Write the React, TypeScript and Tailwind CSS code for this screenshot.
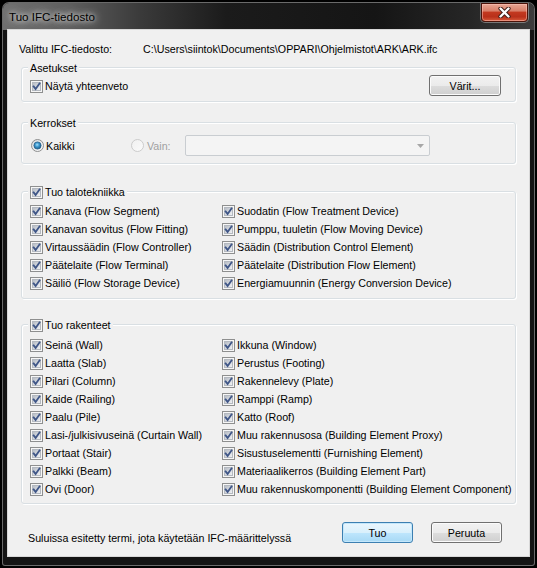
import React, { useId } from "react";

function cleanId(s: string) {
  return s.replace(/[^a-zA-Z0-9]/g, "");
}

function Check() {
  const id = cleanId(useId());
  return (
    <svg width="13" height="13" viewBox="0 0 13 13" className="shrink-0 block">
      <defs>
        <linearGradient id={id} x1="0" y1="0" x2="1" y2="1">
          <stop offset="0" stopColor="#b3b9c2" />
          <stop offset="1" stopColor="#f4f5f7" />
        </linearGradient>
      </defs>
      <rect x="0.5" y="0.5" width="12" height="12" fill="#f6f6f6" stroke="#8e8f8f" />
      <rect x="2.5" y="2.5" width="8" height="8" fill={`url(#${id})`} stroke="#b4b9c0" />
      <path d="M3.6 6.4 L5.6 8.9 L9.5 3.4" fill="none" stroke="#3f5687" strokeWidth="1.8" strokeLinecap="square" strokeLinejoin="miter" />
    </svg>
  );
}

function Radio({ checked, disabled }: { checked?: boolean; disabled?: boolean }) {
  const id = cleanId(useId());
  return (
    <svg width="13" height="13" viewBox="0 0 13 13" className="shrink-0 block">
      <defs>
        <linearGradient id={id + "o"} x1="0" y1="0" x2="1" y2="1">
          <stop offset="0" stopColor={disabled ? "#f0f0f0" : "#d8dadd"} />
          <stop offset="1" stopColor="#fbfbfb" />
        </linearGradient>
        <radialGradient id={id + "d"} cx="0.45" cy="0.4" r="0.6">
          <stop offset="0" stopColor="#a9e0fb" />
          <stop offset="0.45" stopColor="#3f9bd0" />
          <stop offset="1" stopColor="#175a8a" />
        </radialGradient>
      </defs>
      <circle cx="6.5" cy="6.5" r="6" fill={`url(#${id}o)`} stroke={disabled ? "#cbcbcb" : "#8e8f8f"} />
      {checked && <circle cx="6.5" cy="6.5" r="3.6" fill={`url(#${id}d)`} stroke="#2a628c" strokeWidth="0.8" />}
    </svg>
  );
}

function CheckItem({ label }: { label: string }) {
  return (
    <div className="flex items-center gap-[2px] h-[18px] whitespace-nowrap">
      <Check />
      <span className="leading-[14px]">{label}</span>
    </div>
  );
}

function Button({ label, primary, className }: { label: string; primary?: boolean; className?: string }) {
  return (
    <div
      className={
        "flex items-center justify-center rounded-[3px] border " +
        (primary
          ? "border-[#3c7fb1] bg-[linear-gradient(180deg,#eaf6fd_0%,#d9f0fc_50%,#bee6fd_51%,#a7d9f5_100%)] shadow-[inset_0_0_0_1px_#c4e7fb] "
          : "border-[#707070] bg-[linear-gradient(180deg,#f2f2f2_0%,#ebebeb_50%,#dddddd_51%,#cfcfcf_100%)] shadow-[inset_0_0_0_1px_#fbfbfb] ") +
        (className ?? "")
      }
    >
      <span className="leading-[14px]">{label}</span>
    </div>
  );
}

const tekniikka: [string, string][] = [
  ["Kanava (Flow Segment)", "Suodatin (Flow Treatment Device)"],
  ["Kanavan sovitus (Flow Fitting)", "Pumppu, tuuletin (Flow Moving Device)"],
  ["Virtaussäädin (Flow Controller)", "Säädin (Distribution Control Element)"],
  ["Päätelaite (Flow Terminal)", "Päätelaite (Distribution Flow Element)"],
  ["Säiliö (Flow Storage Device)", "Energiamuunnin (Energy Conversion Device)"],
];

const rakenteet: [string, string][] = [
  ["Seinä (Wall)", "Ikkuna (Window)"],
  ["Laatta (Slab)", "Perustus (Footing)"],
  ["Pilari (Column)", "Rakennelevy (Plate)"],
  ["Kaide (Railing)", "Ramppi (Ramp)"],
  ["Paalu (Pile)", "Katto (Roof)"],
  ["Lasi-/julkisivuseinä (Curtain Wall)", "Muu rakennusosa (Building Element Proxy)"],
  ["Portaat (Stair)", "Sisustuselementti (Furnishing Element)"],
  ["Palkki (Beam)", "Materiaalikerros (Building Element Part)"],
  ["Ovi (Door)", "Muu rakennuskomponentti (Building Element Component)"],
];

function Group({
  legend,
  children,
  className,
}: {
  legend: React.ReactNode;
  children: React.ReactNode;
  className?: string;
}) {
  return (
    <div
      className={
        "relative mx-[13px] rounded-[3px] border border-[#d9dfe3] shadow-[inset_1px_1px_0_#fff,1px_1px_0_#fff] " +
        (className ?? "")
      }
    >
      <div className="absolute left-[6px] top-0 -translate-y-1/2 bg-[#f0f0f0] px-[2px] h-[14px] flex items-center">
        {legend}
      </div>
      {children}
    </div>
  );
}

function TwoCols({ rows }: { rows: [string, string][] }) {
  return (
    <div className="grid grid-cols-[192px_1fr]">
      {rows.map(([a, b]) => (
        <React.Fragment key={a}>
          <CheckItem label={a} />
          <CheckItem label={b} />
        </React.Fragment>
      ))}
    </div>
  );
}

export default function App() {
  return (
    <div className="w-[537px] h-[568px] bg-black p-[2px] font-['Liberation_Sans',Arial,sans-serif] text-[10.7px] text-black">
      <div className="h-full flex flex-col rounded-t-[7px] rounded-b-[3px] border border-[#8f8f8f]/70 bg-[#141414] overflow-hidden">
        {/* Title bar */}
        <div className="h-[27px] shrink-0 flex items-start justify-between bg-[linear-gradient(90deg,#6f6f6f_0%,#5f5f5f_12%,#3a3a3a_26%,#1b1b1b_42%,#151515_70%,#262626_88%,#3c3c3c_100%)]">
          <div className="h-full flex items-center pl-[6px] text-[11.6px] leading-[14px] text-black [text-shadow:0_0_5px_rgba(255,255,255,0.9),0_0_10px_rgba(255,255,255,0.65),0_0_14px_rgba(255,255,255,0.45)]">
            Tuo IFC-tiedosto
          </div>
          <div className="mr-[6px] w-[47px] h-[19px] rounded-b-[4px] border border-[#4a1208] shadow-[0_0_0_1px_rgba(255,255,255,0.35),inset_0_0_0_1px_rgba(255,200,190,0.5)] bg-[linear-gradient(180deg,#e7a694_0%,#d9806a_40%,#c2381f_50%,#b9301a_75%,#d65a3a_100%)] flex items-center justify-center">
            <svg width="13" height="11" viewBox="0 0 13 11">
              <path d="M2.5 1.5 L10.5 9.5 M10.5 1.5 L2.5 9.5" stroke="#3b1a14" strokeWidth="4.2" strokeLinecap="round" />
              <path d="M2.5 1.5 L10.5 9.5 M10.5 1.5 L2.5 9.5" stroke="#ffffff" strokeWidth="2.4" strokeLinecap="round" />
            </svg>
          </div>
        </div>

        {/* Client area */}
        <div className="mx-[5px] h-[526px] shrink-0 bg-[#f0f0f0] flex flex-col shadow-[0_0_0_1px_#d8d8d8]">
          {/* File row */}
          <div className="pt-[12px] pl-[11px] flex h-[26px] items-start">
            <span className="w-[124px] leading-[14px]">Valittu IFC-tiedosto:</span>
            <span className="leading-[14px]">C:\Users\siintok\Documents\OPPARI\Ohjelmistot\ARK\ARK.ifc</span>
          </div>

          {/* Asetukset */}
          <Group legend={<span className="leading-[14px]">Asetukset</span>} className="mt-[11px] h-[35px]">
            <div className="h-full flex items-center justify-between pl-[8px] pr-[14px] pt-[3px]">
              <CheckItem label="Näytä yhteenveto" />
              <Button label="Värit..." className="w-[72px] h-[21px] -mt-[1px]" />
            </div>
          </Group>

          {/* Kerrokset */}
          <Group legend={<span className="leading-[14px]">Kerrokset</span>} className="mt-[20px] h-[42px]">
            <div className="h-full flex items-center pl-[9px] pt-[5px]">
              <div className="flex items-center gap-[2px] w-[100px]">
                <Radio checked />
                <span className="leading-[14px]">Kaikki</span>
              </div>
              <div className="flex items-center gap-[3px] w-[54px] text-[#a0a0a0]">
                <Radio disabled />
                <span className="leading-[14px]">Vain:</span>
              </div>
              <div className="w-[245px] h-[21px] rounded-[2px] border border-[#c9cdd1] bg-[#f4f4f4] flex items-center justify-end pr-[5px]">
                <svg width="7" height="4" viewBox="0 0 7 4">
                  <path d="M0 0 L7 0 L3.5 4 Z" fill="#a7a7a7" />
                </svg>
              </div>
            </div>
          </Group>

          {/* Tuo talotekniikka */}
          <Group legend={<CheckItem label="Tuo talotekniikka" />} className="mt-[27px] pt-[10px] pb-[6px] pl-[8px]">
            <TwoCols rows={tekniikka} />
          </Group>

          {/* Tuo rakenteet */}
          <Group legend={<CheckItem label="Tuo rakenteet" />} className="mt-[25px] pt-[11px] pb-[5px] pl-[8px]">
            <TwoCols rows={rakenteet} />
          </Group>

          {/* Footer */}
          <div className="mt-[18px] flex items-start">
            <span className="pl-[20px] pt-[9px] leading-[14px] w-[334px]">
              Suluissa esitetty termi, jota käytetään IFC-määrittelyssä
            </span>
            <Button label="Tuo" primary className="w-[71px] h-[21px]" />
            <Button label="Peruuta" className="w-[71px] h-[21px] ml-[18px]" />
          </div>
        </div>
      </div>
    </div>
  );
}
